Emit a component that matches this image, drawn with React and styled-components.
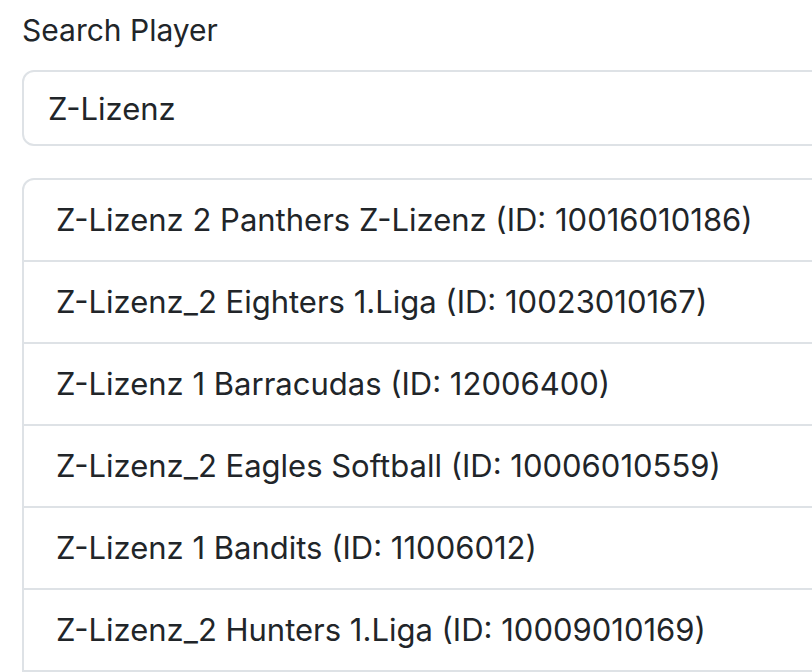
import React from "react"
import styled, { createGlobalStyle } from "styled-components"

const GlobalStyle = createGlobalStyle`
  html, body {
    margin: 0;
    padding: 0;
    background: #ffffff;
    overflow: hidden;
  }
  * {
    box-sizing: border-box;
  }
`

const Page = styled.div`
  padding: 6px 0 0 22px;
  width: 960px;
  font-family: Inter, "Noto Sans", "Liberation Sans", sans-serif;
  color: #212529;
`

const Label = styled.label`
  display: block;
  font-size: 30px;
  line-height: 48px;
  margin-bottom: 16px;
`

const Input = styled.input`
  display: block;
  width: 100%;
  height: 76px;
  padding: 0 24px;
  font-family: inherit;
  font-size: 31px;
  color: #212529;
  background: #ffffff;
  border: 2px solid #dee2e6;
  border-radius: 12px;
  outline: none;
  margin-bottom: 32px;
`

// list keeps going below the fold, so no bottom corner shows
const List = styled.ul`
  list-style: none;
  margin: 0;
  padding: 0 0 40px;
  border: 2px solid #dee2e6;
  border-radius: 12px;
  overflow: hidden;
`

const Item = styled.li`
  padding: 16px 32px;
  font-size: 31px;
  line-height: 48px;
  border-bottom: 2px solid #dee2e6;
  white-space: nowrap;
`

const players = [
  "Z-Lizenz 2 Panthers Z-Lizenz (ID: 10016010186)",
  "Z-Lizenz_2 Eighters 1.Liga (ID: 10023010167)",
  "Z-Lizenz 1 Barracudas (ID: 12006400)",
  "Z-Lizenz_2 Eagles Softball (ID: 10006010559)",
  "Z-Lizenz 1 Bandits (ID: 11006012)",
  "Z-Lizenz_2 Hunters 1.Liga (ID: 10009010169)",
]

const App = () => {
  return (
    <Page>
      <GlobalStyle />
      <Label htmlFor="search">Search Player</Label>
      <Input id="search" defaultValue="Z-Lizenz" />
      <List>
        {players.map((p, i) => (
          <Item key={i}>{p}</Item>
        ))}
      </List>
    </Page>
  )
}

export default App
